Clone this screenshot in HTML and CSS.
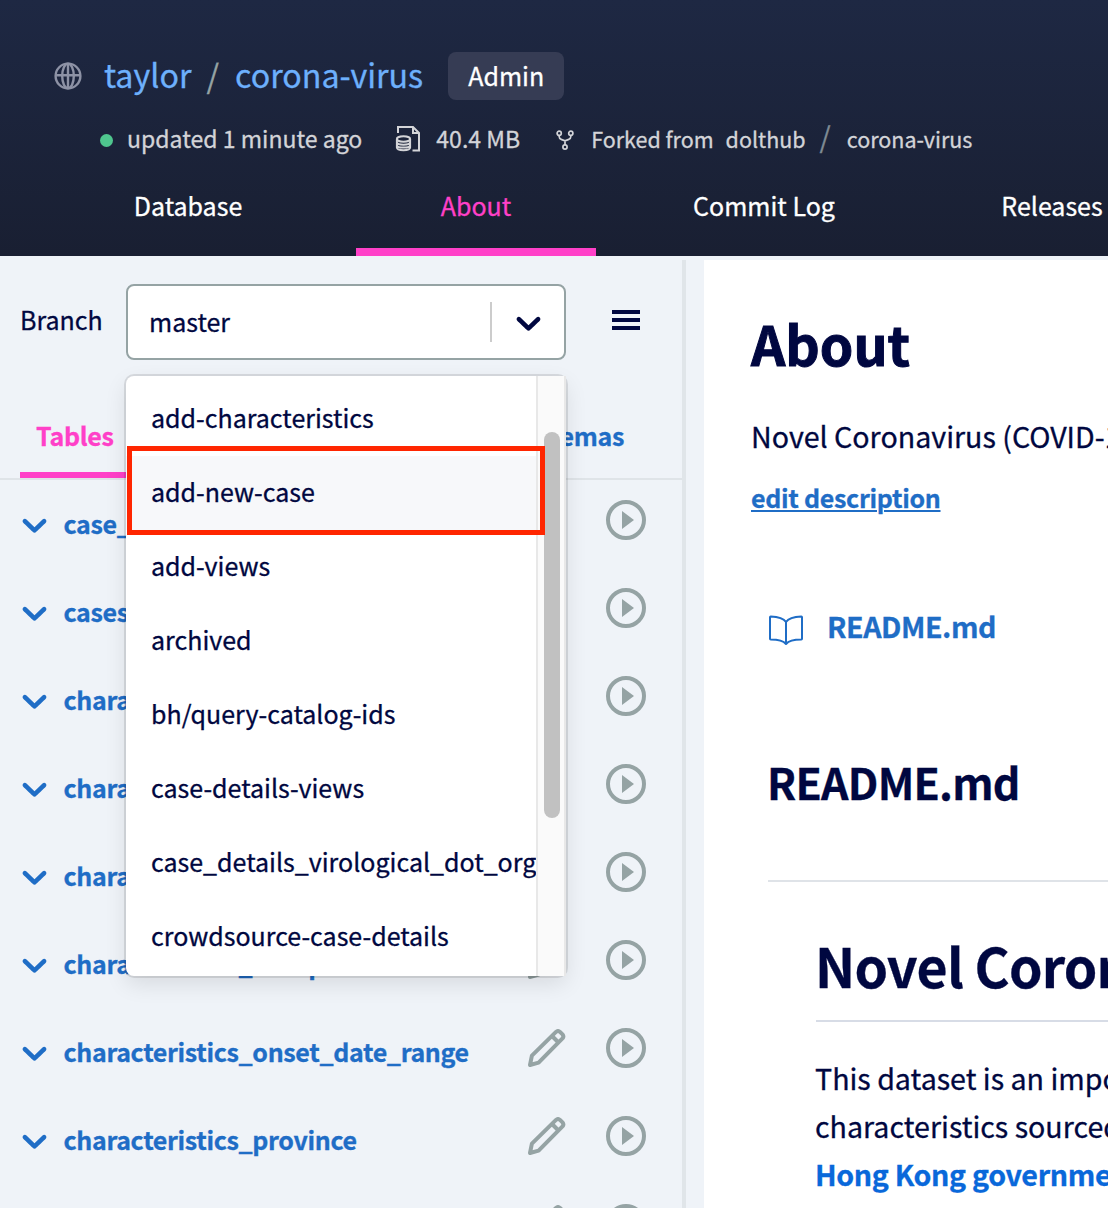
FILE: index.html
```html
<!DOCTYPE html>
<html lang="en">
<head>
<meta charset="utf-8">
<title>taylor/corona-virus</title>
<link rel="stylesheet" href="styles.css">
</head>
<body>
<svg class="defs" aria-hidden="true">
  <symbol id="chevron" viewBox="0 0 20 20"><path fill="currentColor" d="M4.516 7.548c.436-.446 1.043-.481 1.576 0L10 11.295l3.908-3.747c.533-.481 1.141-.446 1.574 0 .436.445.408 1.197 0 1.615-.406.418-4.695 4.502-4.695 4.502-.217.223-.502.335-.787.335s-.57-.112-.789-.335c0 0-4.287-4.084-4.695-4.502s-.436-1.17 0-1.615z"/></symbol>
  <symbol id="play" viewBox="0 0 40 40"><circle cx="20" cy="20" r="18" fill="none" stroke="currentColor" stroke-width="4"/><path fill="currentColor" d="M16 11v18l12-9z"/></symbol>
  <symbol id="pencil" viewBox="0 0 38 38"><g fill="none" stroke="currentColor" stroke-width="4" stroke-linejoin="round"><path d="M2 36l1.900-9.300L28 2.900q2-1.700 4 0l2.500 2.500q1.700 2 0 4L10.600 33.600z"/><path d="M24 7l6.500 6.500"/></g></symbol>
</svg>

<header class="header">
  <div class="title">
    <svg class="globe" viewBox="0 0 28 28" fill="none" stroke="currentColor" stroke-width="2.400"><circle cx="14" cy="14" r="12.400"/><ellipse cx="14" cy="14" rx="5.800" ry="12.400"/><path d="M14 1.400v25.200M1.400 13.300h25.200"/></svg>
    <a class="owner">taylor</a><span class="slash">/</span><a class="repo">corona-virus</a>
    <span class="badge">Admin</span>
  </div>
  <div class="meta">
    <span class="dot"></span>
    <span class="updated">updated 1 minute ago</span>
    <svg class="size-icon" viewBox="0 0 26 28" fill="none" stroke="currentColor" stroke-width="2"><path d="M3 9V3h15l6 6v17.500h-6.500M18 3v6h6"/><ellipse cx="8.500" cy="15" rx="6.600" ry="2.700"/><path d="M1.900 15v8.500c0 3.600 13.200 3.600 13.200 0V15M1.900 18c0 3.600 13.200 3.600 13.200 0M1.900 20.900c0 3.600 13.200 3.600 13.200 0"/></svg>
    <span class="size">40.4 MB</span>
    <svg class="fork" viewBox="0 0 18 22" fill="none" stroke="currentColor" stroke-width="1.700"><circle cx="3.200" cy="4.300" r="2.100"/><circle cx="14.800" cy="4.300" r="2.100"/><circle cx="9" cy="18" r="2.100"/><path d="M3.200 6.400v1.200q0 2.200 2 2.800l3.800 1.500 3.800-1.500q2-.6 2-2.800V6.400M9 11.900v4"/></svg>
    <span class="forked">Forked from</span>
    <a class="fork-owner">dolthub</a><span class="slash-small">/</span><a class="fork-repo">corona-virus</a>
  </div>
  <nav class="nav">
    <a class="nav-tab">Database</a>
    <a class="nav-tab active">About</a>
    <a class="nav-tab">Commit Log</a>
    <a class="nav-tab">Releases</a>
  </nav>
</header>

<div class="body">
  <aside class="sidebar">
    <div class="branch">
      <label class="branch-label">Branch</label>
      <div class="select">
        <span class="select-value">master</span>
        <span class="select-arrow"><svg class="chevron"><use href="#chevron"/></svg></span>
        <div class="menu">
          <ul class="options">
            <li>add-characteristics</li>
            <li class="focused">add-new-case</li>
            <li>add-views</li>
            <li>archived</li>
            <li>bh/query-catalog-ids</li>
            <li>case-details-views</li>
            <li>case_details_virological_dot_org</li>
            <li>crowdsource-case-details</li>
          </ul>
          <div class="track"><div class="thumb"></div></div>
          <div class="highlight"></div>
        </div>
      </div>
      <div class="burger"><i></i><i></i><i></i></div>
    </div>
    <div class="tabs">
      <a class="tab active">Tables</a>
      <a class="tab">Views</a>
      <a class="tab">Schemas</a>
    </div>
    <ul class="tables">
      <li><svg class="chevron"><use href="#chevron"/></svg><a>case_details</a><svg class="pencil"><use href="#pencil"/></svg><svg class="play"><use href="#play"/></svg></li>
      <li><svg class="chevron"><use href="#chevron"/></svg><a>cases</a><svg class="pencil"><use href="#pencil"/></svg><svg class="play"><use href="#play"/></svg></li>
      <li><svg class="chevron"><use href="#chevron"/></svg><a>characteristics_age</a><svg class="pencil"><use href="#pencil"/></svg><svg class="play"><use href="#play"/></svg></li>
      <li><svg class="chevron"><use href="#chevron"/></svg><a>characteristics_case</a><svg class="pencil"><use href="#pencil"/></svg><svg class="play"><use href="#play"/></svg></li>
      <li><svg class="chevron"><use href="#chevron"/></svg><a>characteristics_city</a><svg class="pencil"><use href="#pencil"/></svg><svg class="play"><use href="#play"/></svg></li>
      <li><svg class="chevron"><use href="#chevron"/></svg><a>characteristics_occupation</a><svg class="pencil"><use href="#pencil"/></svg><svg class="play"><use href="#play"/></svg></li>
      <li><svg class="chevron"><use href="#chevron"/></svg><a>characteristics_onset_date_range</a><svg class="pencil"><use href="#pencil"/></svg><svg class="play"><use href="#play"/></svg></li>
      <li><svg class="chevron"><use href="#chevron"/></svg><a>characteristics_province</a><svg class="pencil"><use href="#pencil"/></svg><svg class="play"><use href="#play"/></svg></li>
      <li><svg class="chevron hidden"><use href="#chevron"/></svg><a></a><svg class="pencil"><use href="#pencil"/></svg><svg class="play"><use href="#play"/></svg></li>
    </ul>
  </aside>

  <main class="main">
    <h1 class="about">About</h1>
    <p class="description">Novel Coronavirus (COVID-19)</p>
    <a class="edit">edit description</a>
    <div class="doc">
      <a class="doc-link"><svg class="book" viewBox="0 0 36 32" fill="none" stroke="currentColor" stroke-width="2" stroke-linejoin="round"><path d="M18 8C15.500 4.200 10 2.700 2.700 2.500q-.7 0-.7.700v21.600q0 .8.700.8C9 25.700 15 26.500 18 30c3-3.500 9-4.300 15.300-4.400q.7 0 .7-.8V3.200q0-.7-.7-.7C26 2.700 20.500 4.200 18 8zM18 8v22"/></svg>README.md</a>
      <h2 class="doc-title">README.md</h2>
      <article class="markdown">
        <h1 class="doc-heading">Novel Coronavirus</h1>
        <p class="text">This dataset is an important<br>characteristics sourced from<br><a class="text-link">Hong Kong government</a></p>
      </article>
    </div>
  </main>
</div>
</body>
</html>
```
FILE: styles.css
```css
* { box-sizing: border-box; }

body {
  margin: 0;
  height: 1208px;
  overflow: hidden;
  background: #eff3f8;
  color: #000740;
  font: 400 25px/30px "Noto Sans CJK SC", "Noto Sans", sans-serif;
  white-space: nowrap;
  -webkit-text-stroke: .3px;
}

h1, h2, p, ul { margin: 0; padding: 0; list-style: none; }
svg { display: block; flex: none; }
.defs { position: absolute; width: 0; height: 0; }

/* Header */
.header {
  height: 256px;
  padding-top: 52px;
  overflow: hidden;
  background: linear-gradient(#1e2843, #191f32);
}

.title {
  display: flex;
  align-items: center;
  height: 48px;
  padding-left: 54px;
  font-size: 32.2px;
  line-height: 44px;
}
.globe { width: 28px; height: 28px; color: #8d92a5; }
.owner, .repo { color: #6db0fc; padding-bottom: 4px; }
.owner { margin-left: 22px; }
.slash { margin: 0 16px 0 15px; padding-bottom: 4px; color: #95a3a4; }
.badge {
  height: 48px;
  margin-left: 25px;
  padding: 0 20px;
  border-radius: 8px;
  background: #363c54;
  color: #fff;
  font-size: 25px;
  line-height: 46px;
}

.meta {
  display: flex;
  align-items: center;
  height: 28px;
  margin-top: 24px;
  padding-left: 100px;
  color: #d3d4d8;
  font-size: 21.5px;
  line-height: 28px;
}
.dot { width: 13px; height: 13px; margin-top: 5px; border-radius: 50%; background: #4fc68e; }
.updated, .size { font-size: 23.05px; }
.updated { margin-left: 14px; }
.size-icon { width: 26px; height: 28px; margin-left: 33px; }
.size { margin-left: 15px; }
.fork { width: 18px; height: 22px; margin: 4px 0 0 36px; }
.forked { margin-left: 17px; }
.fork-owner { margin-left: 12px; }
.forked, .fork-owner, .fork-repo { padding-top: 1px; }
.slash-small { margin: 0 16px 0 14px; padding-bottom: 5px; color: #7f8b94; font-size: 28.5px; }

.nav {
  display: flex;
  gap: 48px;
  height: 86px;
  margin-top: 18px;
  padding-left: 68px;
}
.nav-tab {
  flex: none;
  width: 240px;
  padding-top: 20px;
  color: #fff;
  text-align: center;
  border-bottom: 8px solid transparent;
}
.nav-tab.active { color: #ff40c8; border-color: #ff40c8; }

/* Layout */
.body { display: flex; height: 952px; padding-top: 4px; }
.sidebar { flex: none; width: 686px; border-right: 4px solid #e0e5e9; }
.main { flex: 1; min-width: 0; margin-left: 18px; padding: 51px 0 0 47px; background: #fff; overflow: hidden; }

/* Branch picker */
.branch { display: flex; align-items: center; height: 100px; padding: 24px 0 0 20px; }
.branch-label { width: 106px; padding-bottom: 7px; }
.select {
  position: relative;
  display: flex;
  align-items: center;
  width: 440px;
  height: 76px;
  border: 2px solid #95a3a4;
  border-radius: 8px;
  background: #fff;
}
.select-value { flex: 1; padding: 0 0 2px 21px; }
.select-arrow {
  display: flex;
  align-items: center;
  justify-content: center;
  width: 74px;
  height: 40px;
  border-left: 2px solid #ccc;
}
.chevron { width: 41px; height: 41px; }
.burger { display: flex; flex-direction: column; gap: 4px; width: 28px; margin: -4px 0 0 46px; }
.burger i { height: 4px; background: #000740; }

.menu {
  position: absolute;
  z-index: 2;
  top: 90px;
  left: -2px;
  display: flex;
  width: 440px;
  height: 600px;
  border-radius: 8px;
  background: #fff;
  box-shadow: 0 0 0 2px rgba(0, 0, 0, .1), 0 8px 22px rgba(0, 0, 0, .1);
}
.options { width: 410px; padding-top: 6px; overflow: hidden; border-radius: 8px 0 0 8px; }
.options li { height: 74px; padding-left: 25px; line-height: 70px; }
.options .focused { background: #f7f8fa; }
.track {
  width: 30px;
  padding: 56px 4px 0 6px;
  border: solid #e8e8e8;
  border-width: 0 2px;
  background: #fafafa;
}
.thumb { width: 16px; height: 386px; border-radius: 8px; background: #c1c1c1; }
.highlight {
  position: absolute;
  top: 70px;
  left: 1px;
  width: 418px;
  height: 89px;
  border: 5px solid #ff2600;
}

/* Sidebar tabs and tables */
.tabs {
  display: flex;
  justify-content: space-between;
  align-items: flex-end;
  height: 120px;
  padding: 0 42px 0 20px;
  border-bottom: 2px solid #dfe4e8;
  color: #1f6dc6;
  font-weight: 700;
  letter-spacing: -.012em;
}
.tab { height: 58px; padding: 0 16px; border-bottom: 6px solid transparent; }
.tab.active { color: #ff40c8; border-color: #ff40c8; }

.tables { display: flex; flex-direction: column; gap: 8px; height: 728px; overflow: hidden; }
.tables li {
  display: flex;
  flex: none;
  align-items: center;
  height: 80px;
  padding: 0 36px 0 13.5px;
  color: #1f6dc6;
}
.tables .chevron { margin-top: 9px; }
.tables .hidden { visibility: hidden; }
.tables a { flex: 1; padding: 6px 0 0 9px; font-weight: 700; letter-spacing: -.014em; }
.pencil { width: 38px; height: 38px; margin: 0 40px 1px 0; color: #95a3a4; }
.play { width: 40px; height: 40px; color: #95a3a4; }

/* Main column */
.about { font-size: 53.6px; font-weight: 700; line-height: 64px; -webkit-text-stroke: 1px; }
.description { margin-top: 41px; font-size: 28.6px; line-height: 40px; }
.edit {
  display: block;
  margin-top: 26px;
  color: #1f6dc6;
  font-weight: 700;
  letter-spacing: -.012em;
  text-decoration: underline;
  text-decoration-thickness: 2px;
  text-underline-offset: 2px;
}
.doc { margin: 94px 0 0 17px; }
.doc-link {
  display: flex;
  align-items: center;
  gap: 23px;
  color: #1f6dc6;
  font-size: 28.6px;
  font-weight: 700;
  line-height: 40px;
  letter-spacing: -.016em;
}
.book { width: 36px; height: 32px; margin-top: 7px; }
.doc-title {
  margin-top: 110px;
  padding-bottom: 74px;
  border-bottom: 2px solid #dfe3e8;
  font-size: 42.9px;
  line-height: 50px;
  letter-spacing: -.018em;
  text-indent: -1px;
}
.markdown { padding: 51px 0 0 48px; }
.doc-heading {
  padding-bottom: 23px;
  border-bottom: 2px solid #d7dce6;
  font-size: 53.7px;
  line-height: 64px;
  letter-spacing: -.0145em;
  text-indent: -1px;
}
.text { margin: 32px 0 0 -1px; font-size: 28.6px; line-height: 48px; }
.text-link { color: #0968da; font-weight: 700; letter-spacing: -.012em; }
```
